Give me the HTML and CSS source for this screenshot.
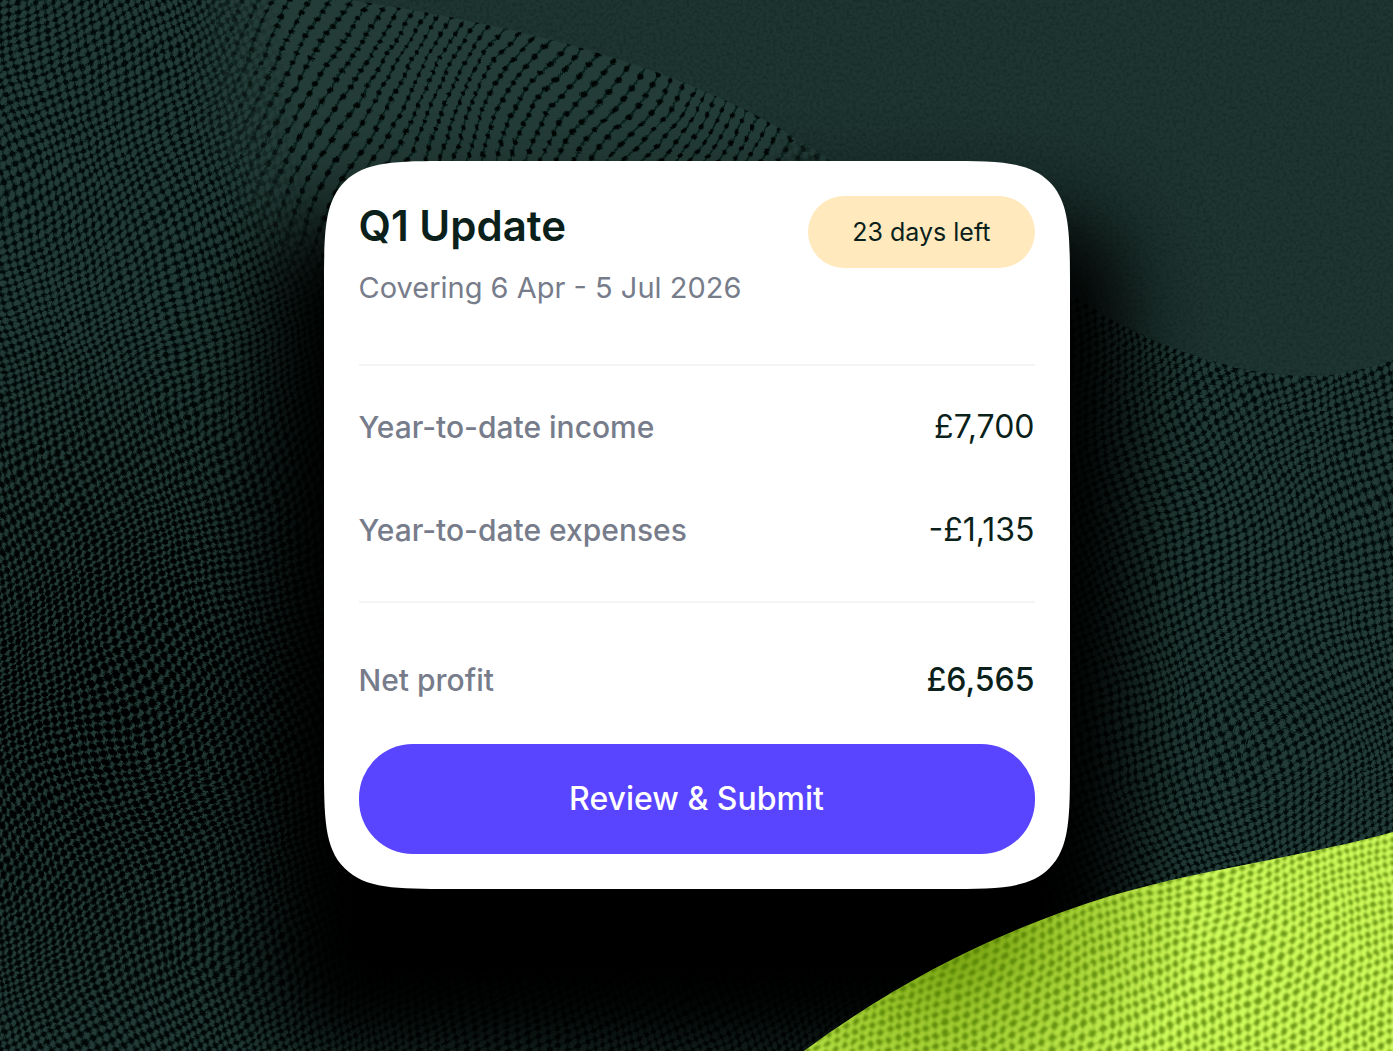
FILE: index.html
```
<!DOCTYPE html>
<html lang="en">
<head>
    <meta charset="UTF-8">
    <meta name="viewport" content="width=device-width, initial-scale=1.0">
    <title>Q1 Update</title>
    <link rel="stylesheet" href="styles.css">
</head>
<body>
    <div class="stage">
        <svg class="art" viewBox="0 0 1393 1051" preserveAspectRatio="xMidYMid slice" aria-hidden="true">
            <defs>
                <pattern id="lines" width="14" height="11" patternUnits="userSpaceOnUse" patternTransform="rotate(30)">
                    <path d="M7 0V11" stroke="#08201b" stroke-width="2"/>
                    <circle cx="7" cy="5.500" r="2.600" fill="#000604"/>
                </pattern>
                <pattern id="dots" width="10" height="13" patternUnits="userSpaceOnUse" patternTransform="rotate(24)">
                    <path d="M0 0L10 13M10 0L0 13" stroke="#071c18" stroke-width="1.400"/>
                    <circle cx="5" cy="6.500" r="2.500" fill="#000a08"/>
                    <circle cx="0" cy="0" r="2.500" fill="#000a08"/>
                    <circle cx="10" cy="0" r="2.500" fill="#000a08"/>
                    <circle cx="0" cy="13" r="2.500" fill="#000a08"/>
                    <circle cx="10" cy="13" r="2.500" fill="#000a08"/>
                </pattern>
                <pattern id="bigDots" width="10" height="13" patternUnits="userSpaceOnUse" patternTransform="rotate(24)">
                    <circle cx="5" cy="6.500" r="3.600"/>
                    <circle cx="0" cy="0" r="3.600"/>
                    <circle cx="10" cy="0" r="3.600"/>
                    <circle cx="0" cy="13" r="3.600"/>
                    <circle cx="10" cy="13" r="3.600"/>
                </pattern>
                <radialGradient id="topFade" gradientUnits="userSpaceOnUse" cx="540" cy="60" r="420">
                    <stop offset="0.600" stop-color="#fff"/>
                    <stop offset="0.850" stop-color="#000"/>
                </radialGradient>
                <radialGradient id="topFadeInverse" gradientUnits="userSpaceOnUse" cx="540" cy="60" r="420">
                    <stop offset="0.600" stop-color="#000"/>
                    <stop offset="0.850" stop-color="#fff"/>
                </radialGradient>
                <radialGradient id="heavyFade" gradientUnits="userSpaceOnUse" cx="100" cy="720" r="420">
                    <stop offset="0" stop-color="#fff"/>
                    <stop offset="0.300" stop-color="#ddd"/>
                    <stop offset="1" stop-color="#000"/>
                </radialGradient>
                <mask id="topMask"><rect x="-100" y="-100" width="1600" height="1300" fill="url(#topFade)"/></mask>
                <mask id="restMask"><rect x="-100" y="-100" width="1600" height="1300" fill="url(#topFadeInverse)"/></mask>
                <mask id="heavyMask"><rect x="-100" y="-100" width="1600" height="1300" fill="url(#heavyFade)"/></mask>
                <clipPath id="wave">
                    <path d="M0 0H350C540 28 710 75 830 160L1080 300C1160 350 1240 376 1310 376C1340 376 1370 368 1393 360V1051H0Z"/>
                </clipPath>
                <filter id="warp" filterUnits="userSpaceOnUse" x="-60" y="-60" width="1520" height="1180" color-interpolation-filters="sRGB">
                    <feTurbulence type="fractalNoise" baseFrequency="0.006" numOctaves="1" seed="21" result="slow"/>
                    <feDisplacementMap in="SourceGraphic" in2="slow" scale="70" xChannelSelector="R" yChannelSelector="G" result="bent"/>
                    <feTurbulence type="fractalNoise" baseFrequency="0.040" numOctaves="1" seed="3" result="fast"/>
                    <feDisplacementMap in="bent" in2="fast" scale="6" xChannelSelector="R" yChannelSelector="G"/>
                    <feGaussianBlur stdDeviation="0.700"/>
                </filter>
                <filter id="grain" x="0" y="0" width="1" height="1" color-interpolation-filters="sRGB">
                    <feTurbulence type="fractalNoise" baseFrequency="0.300" numOctaves="2" seed="5"/>
                    <feColorMatrix values="0 0 0 0 0.030  0 0 0 0 0.110  0 0 0 0 0.100  0.800 0 0 0 -0.300"/>
                </filter>
            </defs>
            <rect width="1393" height="1051" fill="#1e3531"/>
            <rect width="1393" height="1051" filter="url(#grain)"/>
            <g clip-path="url(#wave)">
                <rect width="1393" height="1051" fill="#233c37"/>
                <g filter="url(#warp)">
                    <rect x="-100" y="-100" width="1600" height="1300" fill="url(#dots)" mask="url(#restMask)"/>
                    <rect x="-100" y="-100" width="1600" height="1300" fill="url(#lines)" mask="url(#topMask)"/>
                    <rect x="-100" y="-100" width="1600" height="1300" fill="url(#bigDots)" mask="url(#heavyMask)"/>
                </g>
            </g>
        </svg>

        <main class="card">
            <header class="card-header">
                <div>
                    <h1>Q1 Update</h1>
                    <p class="period">Covering 6 Apr - 5 Jul 2026</p>
                </div>
                <span class="badge">23 days left</span>
            </header>
            <dl class="figures">
                <div class="row">
                    <dt>Year-to-date income</dt>
                    <dd>£7,700</dd>
                </div>
                <div class="row">
                    <dt>Year-to-date expenses</dt>
                    <dd>-£1,135</dd>
                </div>
            </dl>
            <dl class="total">
                <div class="row">
                    <dt>Net profit</dt>
                    <dd>£6,565</dd>
                </div>
            </dl>
            <button type="button" class="submit">Review &amp; Submit</button>
        </main>

        <svg class="art hill" viewBox="0 0 1393 1051" preserveAspectRatio="xMidYMid slice" aria-hidden="true">
            <defs>
                <pattern id="limeDots" width="11" height="16" patternUnits="userSpaceOnUse" patternTransform="rotate(34)">
                    <g fill="#4d7a00">
                        <path d="M0 0L11 16M11 0L0 16" stroke="#5d8600" stroke-opacity="0.400" stroke-width="1.500"/>
                        <circle cx="5.500" cy="8" r="2.900"/>
                        <circle cx="0" cy="0" r="2.900"/>
                        <circle cx="11" cy="0" r="2.900"/>
                        <circle cx="0" cy="16" r="2.900"/>
                        <circle cx="11" cy="16" r="2.900"/>
                    </g>
                </pattern>
                <radialGradient id="lime" gradientUnits="userSpaceOnUse" cx="930" cy="890" r="270">
                    <stop offset="0.150" stop-color="#6f9a0a"/>
                    <stop offset="0.500" stop-color="#a0cb30"/>
                    <stop offset="1" stop-color="#d0fb5c"/>
                </radialGradient>
                <clipPath id="hillShape">
                    <path d="M804 1051C900 980 1000 930 1110 896C1205 868 1300 858 1393 832V1051Z"/>
                </clipPath>
                <filter id="limeWarp" filterUnits="userSpaceOnUse" x="740" y="780" width="700" height="320" color-interpolation-filters="sRGB">
                    <feTurbulence type="fractalNoise" baseFrequency="0.006" numOctaves="1" seed="4" result="slow"/>
                    <feDisplacementMap in="SourceGraphic" in2="slow" scale="50" xChannelSelector="R" yChannelSelector="G" result="bent"/>
                    <feTurbulence type="fractalNoise" baseFrequency="0.040" numOctaves="1" seed="3" result="fast"/>
                    <feDisplacementMap in="bent" in2="fast" scale="5" xChannelSelector="R" yChannelSelector="G"/>
                    <feGaussianBlur stdDeviation="0.800"/>
                </filter>
            </defs>
            <g clip-path="url(#hillShape)">
                <rect x="780" y="800" width="620" height="260" fill="url(#lime)"/>
                <g filter="url(#limeWarp)" opacity="0.750">
                    <rect x="700" y="740" width="800" height="420" fill="url(#limeDots)"/>
                </g>
            </g>
        </svg>
    </div>
</body>
</html>
```
FILE: styles.css
```
* {
    box-sizing: border-box;
}
body {
    margin: 0;
    background-color: #1e3531;
    color: #0b1f1b;
    font-family: Inter, "Liberation Sans", sans-serif;
}
h1, p, dl, dd {
    margin: 0;
}
/* artwork and card share one grid cell */
.stage {
    display: grid;
    grid-template: minmax(100vh, auto) / minmax(0, 1fr);
    overflow: hidden;
}
.art {
    grid-area: 1 / 1;
    width: 100%;
    height: 100%;
    min-height: 0;
    contain: size;
}
.hill {
    z-index: 2;
    pointer-events: none;
}
.card {
    grid-area: 1 / 1;
    z-index: 1;
    place-self: center;
    width: 100%;
    max-width: 746px;
    margin-bottom: 2px;
    padding: 35px;
    border-radius: 72px;
    background-color: #fff;
    box-shadow: 0 108px 84px 58px #000;
}
@supports (corner-shape: squircle) {
    .card {
        border-radius: 130px;
        corner-shape: squircle;
    }
}
.card-header {
    display: flex;
    justify-content: space-between;
    align-items: flex-start;
    gap: 16px;
    padding-bottom: 52px;
    border-bottom: 2px solid #f4f4f5;
}
h1 {
    font-size: 42px;
    line-height: 60px;
    font-weight: 600;
}
.period {
    margin-top: 8px;
    color: #777c8b;
    font-size: 29px;
    line-height: 48px;
}
.badge {
    padding: 0 44px;
    border-radius: 36px;
    background-color: #ffe9bd;
    font-size: 25px;
    line-height: 72px;
    white-space: nowrap;
}
.figures {
    padding: 10px 0 19px;
    border-bottom: 2px solid #f4f4f5;
}
.total {
    padding: 26px 0 12px;
}
.row {
    display: flex;
    justify-content: space-between;
    align-items: center;
    min-height: 103px;
    font-size: 32px;
    line-height: 48px;
}
.row dt {
    color: #777c8b;
    font-size: 30px;
    font-weight: 500;
}
.total dd {
    font-weight: 500;
}
.submit {
    display: block;
    width: 100%;
    height: 110px;
    border: none;
    border-radius: 54px;
    background-color: #5945ff;
    color: #fff;
    font-family: inherit;
    font-size: 32px;
    font-weight: 500;
    cursor: pointer;
}
```
